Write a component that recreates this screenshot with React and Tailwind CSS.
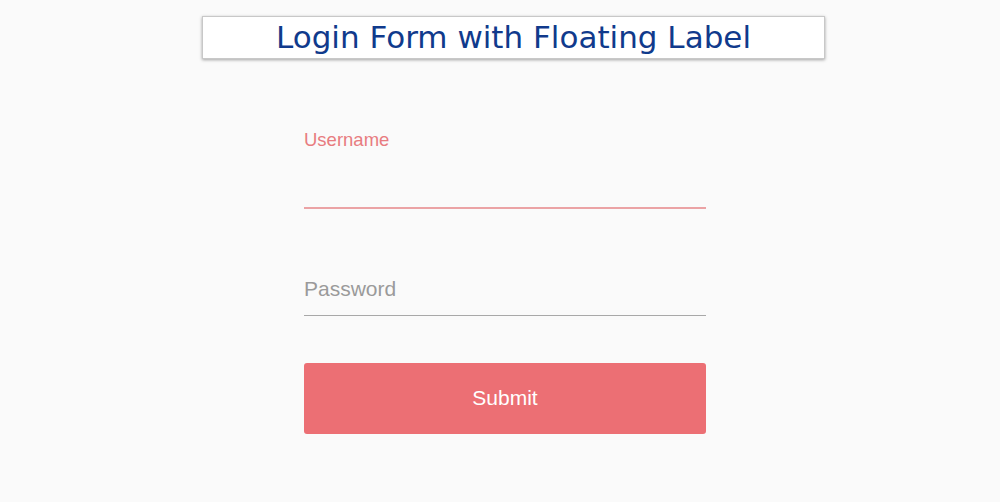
import React from 'react';

const App = () => {
  return (
    <div className="min-h-[502px] w-full bg-[#fafafa]" style={{ fontFamily: '"Liberation Sans", Arial, sans-serif' }}>
      <div className="pt-[16px] pl-[202px]">
        <div className="w-[623px] h-[43px] bg-white border border-[#c8c8c8] shadow-[0_1px_3px_rgba(0,0,0,0.35)] flex items-center justify-center">
          <h1 className="text-[31px] leading-none text-[#103a8c]" style={{ fontFamily: '"DejaVu Sans", Verdana, sans-serif' }}>
            Login Form with Floating Label
          </h1>
        </div>
      </div>

      <form className="w-[402px] ml-[304px] mt-[67px]">
        {/* Username - floated */}
        <div className="relative h-[83px]">
          <label className="absolute left-0 top-0 text-[18.5px] text-[#e87c80]">Username</label>
          <div className="absolute left-0 right-0 bottom-0 h-[2px] bg-[#eba3a5]"></div>
        </div>

        {/* Password */}
        <div className="relative h-[44px] mt-[63px]">
          <label className="absolute left-0 top-[1px] text-[21px] text-[#9a9a9a]">Password</label>
          <div className="absolute left-0 right-0 bottom-0 h-[1px] bg-[#a8a8a8]"></div>
        </div>

        <button type="button" className="mt-[47px] w-full h-[71px] rounded-[3px] bg-[#ec6f74] text-white text-[21px] pb-[2px]">
          Submit
        </button>
      </form>
    </div>
  );
};

export default App;
